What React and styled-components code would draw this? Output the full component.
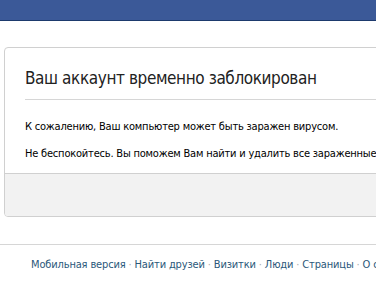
import styled, { createGlobalStyle } from 'styled-components';

const GlobalStyle = createGlobalStyle`
  body {
    margin: 0;
    background: #fff;
    font-family: Tahoma, "DejaVu Sans Condensed", "Liberation Sans", sans-serif;
    overflow: hidden;
  }
`;

const TopBar = styled.div`
  height: 20px;
  background: #3b5998;
  border-bottom: 1px solid #1d3a6d;
`;

const Page = styled.div`
  width: 760px;
  padding: 26px 0 0 4px;
`;

const Card = styled.div`
  border: 1px solid #d0d0d0;
  border-radius: 4px;
  background: #fff;
  overflow: hidden;
`;

const CardBody = styled.div`
  padding: 20px 20px 13px 20px;
`;

const Title = styled.h1`
  margin: 0;
  font-family: "DejaVu Sans Condensed", "Liberation Sans", sans-serif;
  font-weight: normal;
  font-size: 17px;
  letter-spacing: -0.4px;
  color: #222;
  padding: 0 0 11px 0;
  border-bottom: 1px solid #d6d6d6;
`;

const Text = styled.p`
  margin: ${p => (p.first ? '20px' : '14px')} 0 0 0;
  font-size: 11px;
  letter-spacing: -0.2px;
  line-height: 13px;
  color: #000;
  white-space: nowrap;
`;

const CardFooter = styled.div`
  height: 42px;
  background: #f2f2f2;
  border-top: 1px solid #d0d0d0;
`;

const Bottom = styled.div`
  margin-top: 27px;
  border-top: 1px solid #d6d6d6;
  padding: 13px 0 0 31px;
  white-space: nowrap;
  font-size: 11px;
  letter-spacing: -0.15px;
`;

const FootLink = styled.a`
  color: #2b587a;
  text-decoration: none;
`;

const Dot = styled.span`
  color: #aaa;
  margin: 0 3px;
`;

const links = ['Мобильная версия', 'Найти друзей', 'Визитки', 'Люди', 'Страницы', 'О сайте'];

export default function App() {
  return (
    <>
      <GlobalStyle />
      <TopBar />
      <Page>
        <Card>
          <CardBody>
            <Title>Ваш аккаунт временно заблокирован</Title>
            <Text first>К сожалению, Ваш компьютер может быть заражен вирусом.</Text>
            <Text>Не беспокойтесь. Вы поможем Вам найти и удалить все зараженные файлы.</Text>
          </CardBody>
          <CardFooter />
        </Card>
      </Page>
      <Bottom>
        {links.map((l, i) => (
          <span key={l}>
            {i > 0 && <Dot>·</Dot>}
            <FootLink href="#">{l}</FootLink>
          </span>
        ))}
      </Bottom>
    </>
  );
}
